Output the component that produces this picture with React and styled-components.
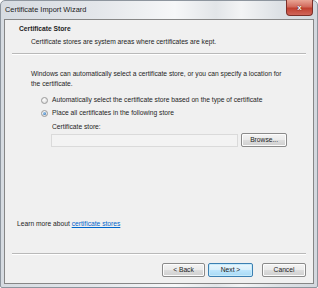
import React from 'react';
import styled, { createGlobalStyle } from 'styled-components';

const GlobalStyle = createGlobalStyle`
  html, body {
    margin: 0;
    padding: 0;
    background: #ffffff;
  }
  body {
    font-family: "Liberation Sans", Arial, sans-serif;
    font-size: 6.7px;
    color: #1e1e1e;
  }
`;

const Window = styled.div`
  width: 318px;
  height: 288px;
  box-sizing: border-box;
  display: flex;
  flex-direction: column;
  border: 1px solid #8d959e;
  border-radius: 5px 5px 2px 2px;
  background: linear-gradient(
    to right,
    #d6dbe1 0%,
    #e3e6ea 30%,
    #f6f7f8 55%,
    #e2e5e8 68%,
    #f3f4f5 76%,
    #dde1e5 88%,
    #d3d8de 100%
  );
`;

const TitleBar = styled.div`
  height: 18px;
  display: flex;
  align-items: flex-start;
  padding-left: 4px;
  padding-right: 4px;
`;

const Title = styled.span`
  font-size: 7.4px;
  line-height: 18px;
  color: #1b1b1b;
`;

const CloseButton = styled.div`
  margin-left: auto;
  margin-top: -1px;
  width: 27px;
  height: 16px;
  box-sizing: border-box;
  border: 1px solid #7c2f28;
  border-top: none;
  border-radius: 0 0 4px 4px;
  background: linear-gradient(to bottom, #e9a595 0%, #d26a5c 45%, #c0402f 55%, #d0655a 100%);
  display: flex;
  align-items: center;
  justify-content: center;
  color: #ffffff;
  font-size: 8px;
  font-weight: bold;
  text-shadow: 0 0 1px #5a1a12, 0 0 1px #5a1a12;
`;

const Client = styled.div`
  flex: 1;
  margin: 0 3px 3px 3px;
  border: 1px solid #868686;
  background: #f0f0f0;
  display: flex;
  flex-direction: column;
`;

const Header = styled.div`
  padding: 4px 0 0 14px;
`;

const HeaderTitle = styled.div`
  font-weight: bold;
  line-height: 10px;
`;

const HeaderSub = styled.div`
  line-height: 10px;
  margin: 3px 0 0 12px;
`;

const Separator = styled.div`
  margin: ${p => p.$top}px 7px 0 7px;
  height: 0;
  border-top: 1px solid #b9b9b9;
  border-bottom: 1px solid #ffffff;
`;

const Body = styled.div`
  flex: 1;
  padding: 14px 26px 0 26px;
  display: flex;
  flex-direction: column;
`;

const Paragraph = styled.p`
  margin: 0;
  line-height: 10px;
`;

const RadioRow = styled.label`
  display: flex;
  align-items: center;
  gap: 4px;
  margin: ${p => p.$top}px 0 0 10px;
  line-height: 10px;
`;

const RadioDot = styled.span`
  width: 7px;
  height: 7px;
  box-sizing: border-box;
  border-radius: 50%;
  border: 1px solid #9a9a9a;
  background: radial-gradient(circle at 40% 35%, #ffffff 0%, #e4e4e4 60%, #cfcfcf 100%);
  display: flex;
  align-items: center;
  justify-content: center;

  &::after {
    content: '';
    width: 3px;
    height: 3px;
    border-radius: 50%;
    background: ${p => (p.$checked ? 'radial-gradient(circle at 35% 35%, #9fd0f5, #1f5fa8)' : 'transparent')};
  }
`;

const StoreBlock = styled.div`
  margin: 4px 0 0 20px;
  display: flex;
  flex-direction: column;
`;

const FieldLabel = styled.div`
  line-height: 10px;
  margin-left: 1px;
`;

const FieldRow = styled.div`
  display: flex;
  align-items: center;
  gap: 3px;
  margin-top: 1px;
`;

const StoreField = styled.div`
  width: 188px;
  height: 13px;
  box-sizing: border-box;
  border: 1px solid #dadada;
  background: #f3f3f3;
`;

const Button = styled.div`
  width: ${p => p.$w}px;
  height: ${p => p.$h || 14}px;
  box-sizing: border-box;
  border: 1px solid ${p => (p.$default ? '#3c7fb1' : '#8a8a8a')};
  border-radius: 2px;
  background: ${p =>
    p.$default
      ? 'linear-gradient(to bottom, #eaf6fd 0%, #d9f0fc 48%, #bee6fd 52%, #a7d9f5 100%)'
      : 'linear-gradient(to bottom, #f3f3f3 0%, #ebebeb 48%, #dddddd 52%, #cfcfcf 100%)'};
  box-shadow: inset 0 0 0 1px ${p => (p.$default ? '#c8ebfb' : '#fcfcfc')};
  display: flex;
  align-items: center;
  justify-content: center;
  line-height: 10px;
  color: #1b1b1b;
`;

const LearnMore = styled.div`
  margin: auto 0 0 -14px;
  padding-bottom: 24px;
  line-height: 10px;
`;

const Link = styled.a`
  color: #0066cc;
  text-decoration: underline;
`;

const Footer = styled.div`
  display: flex;
  justify-content: flex-end;
  align-items: center;
  padding: 8px 7px 6px 0;
`;

const Gap = styled.span`
  width: ${p => p.$w}px;
`;

export default function App() {
  return (
    <>
      <GlobalStyle />
      <Window>
        <TitleBar>
          <Title>Certificate Import Wizard</Title>
          <CloseButton>x</CloseButton>
        </TitleBar>
        <Client>
          <Header>
            <HeaderTitle>Certificate Store</HeaderTitle>
            <HeaderSub>Certificate stores are system areas where certificates are kept.</HeaderSub>
          </Header>
          <Separator $top={6} />
          <Body>
            <Paragraph>
              Windows can automatically select a certificate store, or you can specify a location for
              <br />
              the certificate.
            </Paragraph>
            <RadioRow $top={6}>
              <RadioDot />
              Automatically select the certificate store based on the type of certificate
            </RadioRow>
            <RadioRow $top={3}>
              <RadioDot $checked />
              Place all certificates in the following store
            </RadioRow>
            <StoreBlock>
              <FieldLabel>Certificate store:</FieldLabel>
              <FieldRow>
                <StoreField />
                <Button $w={46} $h={14}>Browse...</Button>
              </FieldRow>
            </StoreBlock>
            <LearnMore>
              Learn more about <Link href="#">certificate stores</Link>
            </LearnMore>
          </Body>
          <Separator $top={0} />
          <Footer>
            <Button $w={43}>&lt; Back</Button>
            <Gap $w={3} />
            <Button $w={45} $default>Next &gt;</Button>
            <Gap $w={9} />
            <Button $w={44}>Cancel</Button>
          </Footer>
        </Client>
      </Window>
    </>
  );
}
